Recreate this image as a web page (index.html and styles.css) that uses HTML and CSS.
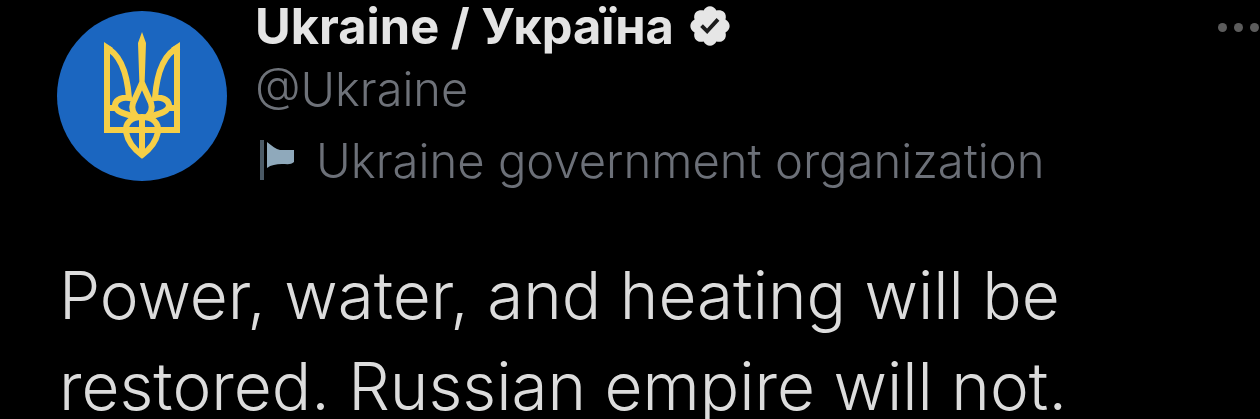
FILE: index.html
```html
<!DOCTYPE html>
<html lang="en">
<head>
<meta charset="utf-8">
<title>Ukraine tweet</title>
<link rel="stylesheet" href="styles.css">
</head>
<body>
<article class="tweet">
  <header class="head">
    <svg class="avatar" viewBox="0 0 170 170" role="img" aria-label="Ukraine">
      <circle cx="85" cy="85" r="85" fill="#1b66c0"/>
      <g fill="none" stroke="#f6cf47" stroke-width="6">
        <path d="M50 38V119H72M120 38V119H98"/>
        <path d="M48 36C62 42 70 60 72 87C66 86 59 88 58 94C58 101 68 103 79 106"/>
        <path d="M122 36C108 42 100 60 98 87C104 86 111 88 112 94C112 101 102 103 91 106"/>
        <path d="M50 97H59M120 97H111"/>
        <path d="M85 72L76 92C74 98 76 102 80 106M85 72L94 92C96 98 94 102 90 106"/>
        <path d="M85 106C74 106 68 112 69 121C71 131 78 139 85 144C92 139 99 131 101 121C102 112 96 106 85 106Z"/>
        <path d="M85 106V144M70 119H100"/>
      </g>
      <path fill="#f6cf47" d="M47 31L56 37L50 42H47ZM123 31L114 37L120 42H123ZM85 21L89 32L87.500 76H82.500L81 32Z"/>
      <path fill="#f6cf47" d="M85 146L78 138H92Z"/>
    </svg>
    <div class="identity">
      <div class="name"><span>Ukraine / Україна</span>
        <svg class="badge" viewBox="0 0 24 24" aria-hidden="true">
          <path fill="#e6e6e6" d="M22.250 12c0-1.430-.880-2.670-2.190-3.340.460-1.390.200-2.900-.810-3.910s-2.520-1.270-3.910-.810c-.660-1.310-1.910-2.190-3.340-2.190s-2.670.880-3.330 2.190c-1.400-.460-2.910-.200-3.920.810s-1.260 2.520-.800 3.910c-1.310.670-2.200 1.910-2.200 3.340s.890 2.670 2.200 3.340c-.460 1.390-.210 2.900.800 3.910s2.520 1.260 3.910.810c.670 1.310 1.910 2.190 3.340 2.190s2.680-.880 3.340-2.190c1.390.450 2.900.200 3.910-.810s1.270-2.520.810-3.910c1.310-.670 2.190-1.910 2.190-3.340z"/>
          <path fill="#1c1c1c" d="M10.540 16.200l-3.650-3.650 1.410-1.420 2.170 2.170 4.970-5.420 1.470 1.350z"/>
        </svg>
      </div>
      <div class="handle">@Ukraine</div>
      <div class="label">
        <svg class="flag" viewBox="0 0 36 40" aria-hidden="true">
          <rect x="1" y="0" width="4" height="40" fill="#4a5965"/>
          <path fill="#8fa9bb" d="M8 2C13 6 17 9 21 10H35V22C32 25 28 24 23 24C17 24 12 25 8 28Z"/>
        </svg>
        <span>Ukraine government organization</span>
      </div>
    </div>
    <div class="more" aria-label="More"><i></i><i></i><i></i></div>
  </header>
  <p class="text">Power, water, and heating will be restored. Russian empire will not.</p>
</article>
</body>
</html>
```
FILE: styles.css
```css
html, body {
  margin: 0;
  height: 100%;
  background: #000;
  overflow: hidden;
}
.tweet {
  box-sizing: border-box;
  width: 1260px;
  height: 419px;
  padding: 0 0 0 57px;
  font-family: Inter, "Noto Sans", sans-serif;
  filter: blur(.6px);
}
.head {
  display: flex;
  align-items: flex-start;
}
.avatar {
  flex: none;
  width: 170px;
  height: 170px;
  margin-top: 11px;
}
.identity {
  margin-left: 28px;
  flex: 1;
}
.name {
  display: flex;
  align-items: center;
  gap: 13px;
  height: 52px;
  color: #e4e4e4;
  font-size: 48.800px;
  font-weight: 700;
  white-space: nowrap;
}
.badge {
  flex: none;
  width: 46px;
  height: 46px;
}
.handle {
  height: 72px;
  line-height: 74px;
  color: #6e7279;
  font-size: 46.900px;
  font-weight: 300;
}
.label {
  display: flex;
  align-items: center;
  gap: 21px;
  height: 72px;
  padding-left: 4px;
  color: #6c7078;
  font-size: 47.200px;
  font-weight: 300;
  white-space: nowrap;
}
.flag {
  flex: none;
  width: 36px;
  height: 40px;
}
.more {
  display: flex;
  gap: 7px;
  margin: 23px 1px 0 0;
}
.more i {
  width: 9px;
  height: 9px;
  border-radius: 50%;
  background: #5c5c5c;
}
.text {
  margin: 54px 170px 0 2px;
  color: #dcdcdc;
  font-size: 65.600px;
  font-weight: 300;
  line-height: 91px;
}
```
